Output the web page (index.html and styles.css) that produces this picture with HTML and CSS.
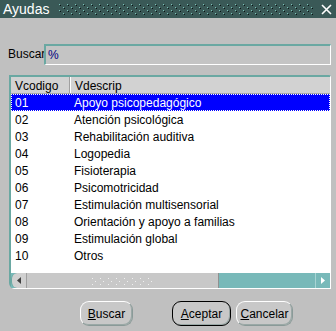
FILE: index.html
```html
<!DOCTYPE html>
<html lang="es">
<head>
  <meta charset="UTF-8">
  <title>Ayudas</title>
  <link rel="stylesheet" href="styles.css">
</head>
<body>
<div class="titlebar">
  <span class="title">Ayudas</span>
  <span class="grip"></span>
  <svg class="close" width="11" height="11" viewBox="0 0 11 11"><path d="M1 1 L10 10 M10 1 L1 10" stroke="#fff" stroke-width="1.6"/></svg>
</div>

<div class="search">
  <label class="search-label">Buscar</label>
  <div class="field">%</div>
</div>

<div class="grid">
  <div class="row head">
    <div class="c1">Vcodigo</div>
    <div class="c2">Vdescrip</div>
  </div>
  <div class="rows">
    <div class="row selected"><div class="c1">01</div><div class="c2">Apoyo psicopedagógico</div></div>
    <div class="row"><div class="c1">02</div><div class="c2">Atención psicológica</div></div>
    <div class="row"><div class="c1">03</div><div class="c2">Rehabilitación auditiva</div></div>
    <div class="row"><div class="c1">04</div><div class="c2">Logopedia</div></div>
    <div class="row"><div class="c1">05</div><div class="c2">Fisioterapia</div></div>
    <div class="row"><div class="c1">06</div><div class="c2">Psicomotricidad</div></div>
    <div class="row"><div class="c1">07</div><div class="c2">Estimulación multisensorial</div></div>
    <div class="row"><div class="c1">08</div><div class="c2">Orientación y apoyo a familias</div></div>
    <div class="row"><div class="c1">09</div><div class="c2">Estimulación global</div></div>
    <div class="row"><div class="c1">10</div><div class="c2">Otros</div></div>
  </div>
  <div class="hscroll">
    <div class="arrow left">
      <svg width="5" height="7" viewBox="0 0 5 7"><path d="M4 0 L4 7 L0 3.5 Z" fill="#404040"/></svg>
    </div>
    <div class="thumb"><span class="dots"></span></div>
    <div class="track"></div>
    <div class="arrow right">
      <svg width="5" height="7" viewBox="0 0 5 7"><path d="M0 0 L0 7 L4 3.5 Z" fill="#ffffff"/></svg>
    </div>
  </div>
</div>

<div class="buttons">
  <button class="btn b-buscar"><u>B</u>uscar</button>
  <button class="btn default"><u>A</u>ceptar</button>
  <button class="btn"><u>C</u>ancelar</button>
</div>
</body>
</html>
```

FILE: styles.css
```css
body {
  margin: 0;
  width: 336px;
  height: 331px;
  background-color: #c0c0c0;
  font-family: "Liberation Sans", Arial, sans-serif;
  font-size: 12px;
  color: #000;
  overflow: hidden;
}
.titlebar {
  height: 18px;
  background-color: #3a5957;
  display: flex;
  align-items: center;
  color: #fff;
}
.title {
  font-size: 14px;
  padding-left: 3px;
  padding-right: 9px;
}
.grip {
  flex: 1;
  height: 12px;
  background-image:
    radial-gradient(circle at 1.5px 1.5px, #7cc2b8 0.9px, transparent 1px),
    radial-gradient(circle at 2.5px 2.5px, #0a1514 0.9px, transparent 1px),
    radial-gradient(circle at 5.5px 4.5px, #7cc2b8 0.9px, transparent 1px),
    radial-gradient(circle at 6.5px 5.5px, #0a1514 0.9px, transparent 1px);
  background-size: 8px 6px;
  margin-right: 6px;
}
.close {
  margin-right: 4px;
}
.search {
  display: flex;
  align-items: center;
  margin-top: 26px;
  height: 20px;
}
.search-label {
  width: 36px;
  padding-left: 8px;
}
.field {
  width: 282px;
  height: 18px;
  line-height: 18px;
  padding-left: 2px;
  color: #000080;
  background-color: #c4c4c4;
  border-top: 2px solid #6aa8a2;
  border-left: 2px solid #6aa8a2;
  border-right: 1px solid #ffffff;
  border-bottom: 1px solid #ffffff;
}
.grid {
  margin: 11px 5px 0 9px;
  height: 211px;
  background-color: #fff;
  border-top: 2px solid #6aa8a2;
  border-left: 2px solid #6aa8a2;
  border-right: 1px solid #ffffff;
  border-bottom: 1px solid #ffffff;
  display: flex;
  flex-direction: column;
  border-radius: 0 2px 0 6px;
}
.rows {
  flex: 1;
}
.row {
  display: flex;
  height: 17px;
  line-height: 17px;
}
.c1 {
  width: 54px;
  padding-left: 4px;
  padding-top: 1px;
}
.c2 {
  flex: 1;
  padding-left: 5px;
  padding-top: 1px;
}
.head {
  background-color: #d2d2d2;
  height: 16px;
  line-height: 16px;
  border-bottom: 1px solid #a8a8a8;
}
.head .c1 {
  border-right: 1px solid #a0a0a0;
  box-shadow: 1px 0 0 #fff;
}
.selected {
  background-color: #0000ff;
  color: #fff;
  outline: 1px dotted #fff;
  outline-offset: -1px;
}
.hscroll {
  display: flex;
  height: 15px;
  background-color: #78b9b9;
}
.arrow {
  width: 14px;
  display: flex;
  align-items: center;
  justify-content: center;
  background-color: #d0d0d0;
}
.arrow.left {
  border-radius: 6px 0 0 6px;
  border-left: 1px solid #6aa8a2;
  border-right: 1px solid #a0a0a0;
}
.arrow.right {
  background-color: #78b9b9;
  border-left: 1px solid #a8d4d4;
  border-radius: 0 0 4px 0;
}
.thumb {
  width: 191px;
  background-color: #c8c8c8;
  border-right: 1px solid #909090;
  display: flex;
  align-items: center;
  justify-content: center;
}
.dots {
  width: 64px;
  height: 8px;
  background-image:
    radial-gradient(circle at 1.5px 1.5px, #f0f0f0 0.9px, transparent 1px),
    radial-gradient(circle at 4.5px 4.5px, #f0f0f0 0.9px, transparent 1px);
  background-size: 8px 6px;
}
.track {
  flex: 1;
}
.buttons {
  display: flex;
  margin-top: 12px;
  padding-left: 80px;
}
.btn {
  font-family: "Liberation Sans", Arial, sans-serif;
  font-size: 12px;
  height: 25px;
  padding: 0;
  background-color: #c8c8c8;
  border: 1px solid #8a9a98;
  border-top-color: #ffffff;
  border-left-color: #ffffff;
  border-radius: 9px;
  box-shadow: inset -1px -1px 0 #9aa8a6;
  color: #000;
}
.b-buscar {
  width: 53px;
  margin-right: 39px;
}
.default {
  width: 59px;
  border: 1px solid #000;
  margin-right: 5px;
}
.btn:last-child {
  width: 57px;
}
```
